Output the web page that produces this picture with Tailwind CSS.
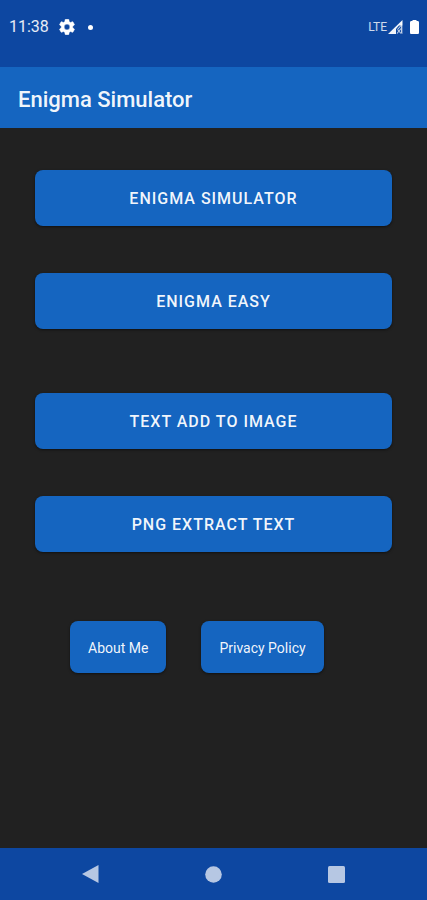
<!DOCTYPE html>
<html lang="en">
<head>
<meta charset="utf-8">
<meta name="viewport" content="width=device-width, initial-scale=1">
<title>Enigma Simulator</title>
<script src="https://cdn.jsdelivr.net/npm/@tailwindcss/browser@4"></script>
</head>
<body class="flex min-h-screen flex-col bg-[#212121] font-[Roboto,sans-serif] text-white">
  <div class="flex h-[67px] items-start justify-between bg-[#0d47a1] pt-[17px] pr-2 pl-[9px]">
    <div class="flex h-5 items-center">
      <span class="text-base leading-5 text-white/90">11:38</span>
      <svg class="ml-[10px] size-4" viewBox="2 2 20 20" fill="currentColor" aria-hidden="true"><path fill-rule="evenodd" stroke="currentColor" stroke-width=".6" d="M19.14 12.94c.04-.3.06-.61.06-.94 0-.32-.02-.64-.07-.94l2.03-1.58a.49.49 0 0 0 .12-.61l-1.92-3.32a.49.49 0 0 0-.59-.22l-2.39.96a7 7 0 0 0-1.62-.94l-.36-2.54a.48.48 0 0 0-.48-.41h-3.84a.48.48 0 0 0-.47.41l-.36 2.54c-.59.24-1.13.57-1.62.94l-2.39-.96a.48.48 0 0 0-.59.22L2.74 8.87a.48.48 0 0 0 .12.61l2.03 1.58c-.05.3-.09.63-.09.94s.02.64.07.94l-2.03 1.58a.49.49 0 0 0-.12.61l1.92 3.32c.12.22.37.29.59.22l2.39-.96c.5.38 1.03.7 1.62.94l.36 2.54c.05.24.24.41.48.41h3.84c.24 0 .44-.17.47-.41l.36-2.54a7 7 0 0 0 1.62-.94l2.39.96c.22.08.47 0 .59-.22l1.92-3.32a.48.48 0 0 0-.12-.61l-2.01-1.58zM12 15.6a3.6 3.6 0 1 1 0-7.2 3.6 3.6 0 0 1 0 7.2z"/></svg>
      <span class="ml-[13px] size-[5px] rounded-full bg-white"></span>
    </div>
    <div class="flex h-5 items-center">
      <span class="text-xs leading-5 text-white/80">LTE</span>
      <svg class="ml-px h-[14px] w-[15px]" viewBox="0 0 15 14" aria-hidden="true"><path d="M0 14 14.5 0V14Z" fill="#fff" fill-opacity=".95"/><path d="M8 14V9l3-3.500h3.500V14Z" fill="#0d47a1"/><path d="M13.500 2v11.500M9.500 9.500l3.500-4M9 13.500l4-5M9.500 9.500l3.500 4" stroke="#fff" stroke-opacity=".75" stroke-width="1.100" fill="none"/></svg>
      <svg class="ml-[7px] h-[14px] w-[9px]" viewBox="0 0 9 14" fill="#fff" aria-hidden="true"><path d="M2.500 0h4v1h1.500Q9 1 9 2.500v10Q9 14 8 14h-7Q0 14 0 12.500v-10Q0 1 1 1h1.500Z"/></svg>
    </div>
  </div>
  <header class="flex h-[61px] items-center bg-[#1565c0] px-[18px] pt-1">
    <h1 class="text-[22px] leading-7 font-medium text-white/95">Enigma Simulator</h1>
  </header>
  <main class="flex flex-1 flex-col px-[35px] pt-[42px]">
    <div class="flex flex-col gap-[47px]">
      <button class="h-14 rounded-lg bg-[#1565c0] pt-px text-base font-medium tracking-[1px] text-white/95 shadow-sm shadow-black/40">ENIGMA SIMULATOR</button>
      <button class="h-14 rounded-lg bg-[#1565c0] pt-px text-base font-medium tracking-[1px] text-white/95 shadow-sm shadow-black/40">ENIGMA EASY</button>
    </div>
    <div class="mt-16 flex flex-col gap-[47px]">
      <button class="h-14 rounded-lg bg-[#1565c0] pt-px text-base font-medium tracking-[1px] text-white/95 shadow-sm shadow-black/40">TEXT ADD TO IMAGE</button>
      <button class="h-14 rounded-lg bg-[#1565c0] pt-px text-base font-medium tracking-[1px] text-white/95 shadow-sm shadow-black/40">PNG EXTRACT TEXT</button>
    </div>
    <div class="mt-[69px] flex gap-[35px] px-[35px]">
      <button class="h-[52px] rounded-lg bg-[#1565c0] px-[18px] pt-0.5 text-sm whitespace-nowrap text-white/95 shadow-sm shadow-black/40">About Me</button>
      <button class="h-[52px] rounded-lg bg-[#1565c0] px-[18px] pt-0.5 text-sm whitespace-nowrap text-white/95 shadow-sm shadow-black/40">Privacy Policy</button>
    </div>
  </main>
  <nav class="flex h-[52px] items-center justify-center gap-[106px] bg-[#0d47a1] text-[#b6c7e3]" aria-label="System navigation">
    <button aria-label="Back"><svg class="h-[18px] w-[17px]" viewBox="0 0 17 18" fill="currentColor"><path d="M0 9 16.500 0V18Z"/></svg></button>
    <button aria-label="Home"><svg class="size-[17px]" viewBox="0 0 17 17" fill="currentColor"><circle cx="8.500" cy="8.500" r="8.300"/></svg></button>
    <button aria-label="Recent apps"><svg class="size-[17px]" viewBox="0 0 17 17" fill="currentColor"><rect width="17" height="17" rx="1.500"/></svg></button>
  </nav>
</body>
</html>
